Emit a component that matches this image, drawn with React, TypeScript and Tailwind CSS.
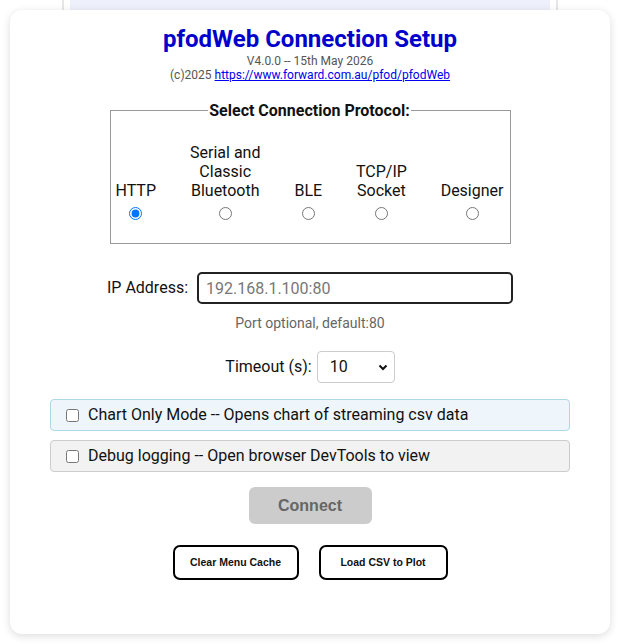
import { useState } from "react";

const protocols = [
  { id: "http", label: "HTTP", w: "" },
  { id: "serial", label: "Serial and Classic Bluetooth", w: "w-[72px]" },
  { id: "ble", label: "BLE", w: "" },
  { id: "tcp", label: "TCP/IP Socket", w: "w-[52px]" },
  { id: "designer", label: "Designer", w: "" },
];

function App() {
  const [proto, setProto] = useState("http");

  return (
    <div className="w-[620px] h-[644px] bg-white font-['Roboto',sans-serif] text-[#111]">
      {/* panel peeking behind the card */}
      <div className="ml-[62px] w-[496px] h-[10px] border-x-2 border-[#e6e6e6] px-[6px]">
        <div className="h-full bg-[#eef0fb]" />
      </div>

      <div className="mx-[10px] h-[624px] rounded-[12px] bg-white shadow-[0_2px_8px_rgba(0,0,0,0.14)] px-[40px] pt-[14px]">
        {/* Header */}
        <div className="flex flex-col items-center">
          <h1 className="text-[24px] leading-[30px] font-bold text-[#0000cd]">
            pfodWeb Connection Setup
          </h1>
          <span className="text-[12px] leading-[14px] text-[#555]">V4.0.0 -- 15th May 2026</span>
          <span className="text-[12px] leading-[14px] text-[#555]">
            (c)2025{" "}
            <a href="#" className="underline text-[#0000ee]">
              https://www.forward.com.au/pfod/pfodWeb
            </a>
          </span>
        </div>

        {/* Protocol */}
        <fieldset className="mx-auto mt-[19px] w-[401px] h-[143px] border border-[#999] pl-[5px] pr-[6px]">
          <legend className="mx-auto px-[1px] text-[16px] leading-[19px] font-bold">
            Select Connection Protocol:
          </legend>
          <div className="flex justify-between items-end mt-[23px]">
            {protocols.map((p) => (
              <label key={p.id} className="flex flex-col items-center gap-[7px] cursor-pointer">
                <span className={"text-[16px] leading-[19px] text-center " + p.w}>{p.label}</span>
                <input
                  type="radio"
                  name="proto"
                  checked={proto === p.id}
                  onChange={() => setProto(p.id)}
                  className="w-[13px] h-[13px] m-0 accent-[#0075ff]"
                />
              </label>
            ))}
          </div>
        </fieldset>

        {/* IP */}
        <div className="flex items-center justify-center gap-[9px] mt-[28px]">
          <span className="text-[16px]">IP Address:</span>
          <input
            type="text"
            placeholder="192.168.1.100:80"
            className="w-[316px] h-[32px] border-2 border-[#222] rounded-[5px] px-[7px] text-[16px] placeholder:text-[#777] outline-none"
          />
        </div>
        <div className="text-center text-[14px] text-[#666] mt-[9px]">Port optional, default:80</div>

        {/* Timeout */}
        <div className="flex items-center justify-center gap-[5px] mt-[17px]">
          <span className="text-[16px]">Timeout (s):</span>
          <div className="relative w-[78px] h-[32px] border border-[#ccc] rounded-[4px] flex items-center pl-[12px]">
            <span className="text-[16px]">10</span>
            <svg className="absolute right-[6px] top-[12px]" width="10" height="7" viewBox="0 0 10 7">
              <path d="M1.5 1.5 L5 5 L8.5 1.5" fill="none" stroke="#111" strokeWidth="2" />
            </svg>
          </div>
        </div>

        {/* Options */}
        <div className="mt-[16px] flex flex-col gap-[9px]">
          <label className="h-[32px] flex items-center gap-[9px] pl-[15px] bg-[#eef6fc] border border-[#add8e6] rounded-[4px]">
            <input type="checkbox" className="w-[13px] h-[13px] m-0" />
            <span className="text-[16px]">Chart Only Mode -- Opens chart of streaming csv data</span>
          </label>
          <label className="h-[32px] flex items-center gap-[9px] pl-[15px] bg-[#f2f2f2] border border-[#ccc] rounded-[4px]">
            <input type="checkbox" className="w-[13px] h-[13px] m-0" />
            <span className="text-[16px]">Debug logging -- Open browser DevTools to view</span>
          </label>
        </div>

        {/* Buttons */}
        <div className="flex justify-center mt-[15px]">
          <button className="w-[123px] h-[37px] rounded-[6px] bg-[#ccc] text-[#666] font-bold text-[16px] font-['Liberation_Sans',sans-serif]">
            Connect
          </button>
        </div>
        <div className="flex justify-center gap-[20px] mt-[21px]">
          <button className="w-[126px] h-[35px] border-2 border-black rounded-[7px] bg-white font-bold text-[10.5px] font-['Liberation_Sans',sans-serif]">
            Clear Menu Cache
          </button>
          <button className="w-[129px] h-[35px] border-2 border-black rounded-[7px] bg-white font-bold text-[10.5px] font-['Liberation_Sans',sans-serif]">
            Load CSV to Plot
          </button>
        </div>
      </div>
    </div>
  );
}

export default App;
